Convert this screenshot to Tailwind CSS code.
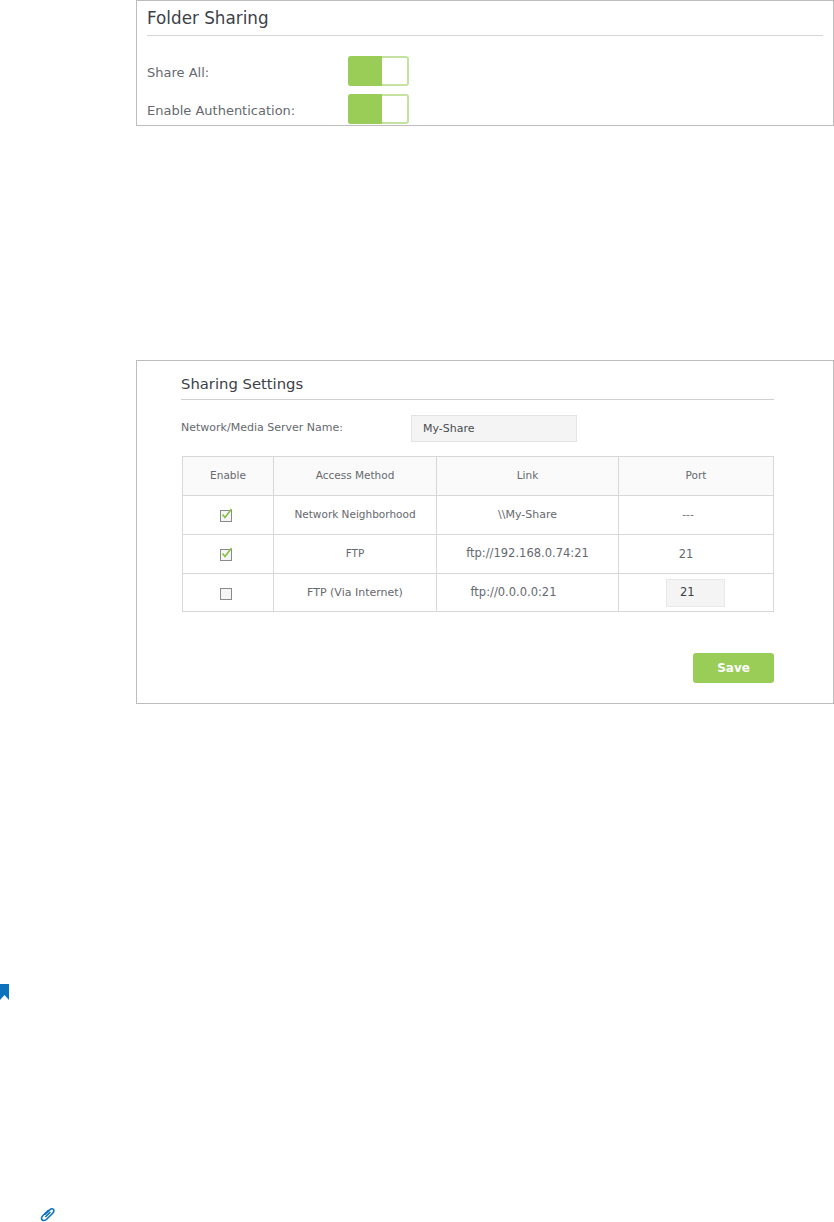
<!DOCTYPE html>
<html lang="en">
  <head>
    <meta charset="UTF-8" />
    <title>Folder Sharing</title>
    <script src="https://cdn.jsdelivr.net/npm/@tailwindcss/browser@4"></script>
  </head>
  <body class="relative h-[1222px] overflow-hidden bg-white font-['DejaVu_Sans',sans-serif] text-[#66696e]">
    <div class="pl-[136px]">
      <!-- folder sharing panel -->
      <section class="h-[126px] w-[698px] border border-[#bdbdbd] pl-[10px] pr-[10px]">
        <h2 class="flex h-[35px] items-center border-b border-[#d6d6d6] pt-[2px] text-[16.8px] text-[#3c4148]">Folder Sharing</h2>
        <div class="mt-[20px] flex h-[30px] items-center">
          <span class="w-[201px] pt-[3px] text-[13px]">Share All:</span>
          <div class="flex h-[30px] w-[61px] rounded-[3px] border-2 border-[#c4e3a0] bg-white">
            <div class="-m-[2px] mr-0 w-[34px] rounded-l-[3px] bg-[#99cd58]"></div>
          </div>
        </div>
        <div class="mt-[8px] flex h-[30px] items-center">
          <span class="w-[201px] pt-[3px] text-[13px]">Enable Authentication:</span>
          <div class="flex h-[30px] w-[61px] rounded-[3px] border-2 border-[#c4e3a0] bg-white">
            <div class="-m-[2px] mr-0 w-[34px] rounded-l-[3px] bg-[#99cd58]"></div>
          </div>
        </div>
      </section>

      <!-- sharing settings panel -->
      <section class="mt-[234px] h-[344px] w-[698px] border border-[#bdbdbd] pl-[44px] pr-[59px]">
        <h2 class="flex h-[39px] items-center border-b border-[#d0d0d0] pt-[8px] text-[14.8px] text-[#3c4148]">Sharing Settings</h2>
        <div class="mt-[15px] flex items-center">
          <span class="w-[230px] text-[11px]">Network/Media Server Name:</span>
          <div class="flex h-[27px] w-[166px] items-center border border-[#e4e4e4] bg-[#f4f4f4] pl-[11px] pt-[2px] text-[11px] text-[#4a4d52]">My-Share</div>
        </div>
        <table class="ml-[1px] mt-[14px] w-[591px] table-fixed border-collapse text-center text-[10.5px]">
          <colgroup>
            <col class="w-[91px]" />
            <col class="w-[163px]" />
            <col class="w-[182px]" />
            <col class="w-[155px]" />
          </colgroup>
          <thead>
            <tr class="h-[39px] bg-[#fafafa]">
              <th class="border border-[#d8d8d8] font-normal">Enable</th>
              <th class="border border-[#d8d8d8] font-normal">Access Method</th>
              <th class="border border-[#d8d8d8] font-normal">Link</th>
              <th class="border border-[#d8d8d8] font-normal">Port</th>
            </tr>
          </thead>
          <tbody>
            <tr class="h-[39px]">
              <td class="border border-[#d8d8d8]">
                <svg class="ml-[36px] block" width="14" height="14" viewBox="0 0 14 14"><rect x="1.5" y="2.5" width="11" height="11" fill="#f5f5f5" stroke="#8a8a8a"/><path d="M3.5 6.5 6 9.5 12.5 1" fill="none" stroke="#85c040" stroke-width="1.6"/></svg>
              </td>
              <td class="border border-[#d8d8d8]">Network Neighborhood</td>
              <td class="border border-[#d8d8d8] text-[11px]">\\My-Share</td>
              <td class="border border-[#d8d8d8] pr-[16px]">---</td>
            </tr>
            <tr class="h-[39px]">
              <td class="border border-[#d8d8d8]">
                <svg class="ml-[36px] block" width="14" height="14" viewBox="0 0 14 14"><rect x="1.5" y="2.5" width="11" height="11" fill="#f5f5f5" stroke="#8a8a8a"/><path d="M3.5 6.5 6 9.5 12.5 1" fill="none" stroke="#85c040" stroke-width="1.6"/></svg>
              </td>
              <td class="border border-[#d8d8d8]">FTP</td>
              <td class="border border-[#d8d8d8] text-[11.5px]">ftp://192.168.0.74:21</td>
              <td class="border border-[#d8d8d8] pr-[20px] pt-[2px] text-[11.5px]">21</td>
            </tr>
            <tr class="h-[38px]">
              <td class="border border-[#d8d8d8]">
                <svg class="ml-[36px] block" width="14" height="14" viewBox="0 0 14 14"><rect x="1.5" y="2.5" width="11" height="11" fill="#f5f5f5" stroke="#8a8a8a"/></svg>
              </td>
              <td class="border border-[#d8d8d8] pt-[1px] text-[11px]">FTP (Via Internet)</td>
              <td class="border border-[#d8d8d8] pr-[28px] text-[11.5px]">ftp://0.0.0.0:21</td>
              <td class="border border-[#d8d8d8] pl-[47px] text-left">
                <div class="flex h-[28px] w-[59px] items-center border border-[#e8e8e8] bg-[#f4f4f4] pl-[13px] text-[11.5px] text-[#3c4148]">21</div>
              </td>
            </tr>
          </tbody>
        </table>
        <div class="mt-[41px] flex justify-end">
          <button class="h-[30px] w-[81px] rounded-[3px] bg-[#99cd58] text-[12px] font-bold text-white">Save</button>
        </div>
      </section>
    </div>

    <!-- margin marks -->
    <svg class="mt-[280px]" width="9" height="16" viewBox="0 0 9 16"><path d="M0 0H9V16L4.5 11 0 16Z" fill="#0d72bd"/></svg>
    <svg class="ml-[40px] mt-[207px]" width="15" height="15" viewBox="0 0 15 15"><path d="M5 7.5 10 2.6C11.5 1.2 13.2 1.6 13.7 2.8S13.6 5.3 12.4 6.5L6.6 12.2C5 13.8 2.6 13.9 1.8 12.5S2 9.5 3 8.5L8.6 3.2M10.4 5 5.4 10" fill="none" stroke="#0d72bd" stroke-width="1.6"/></svg>
  </body>
</html>
